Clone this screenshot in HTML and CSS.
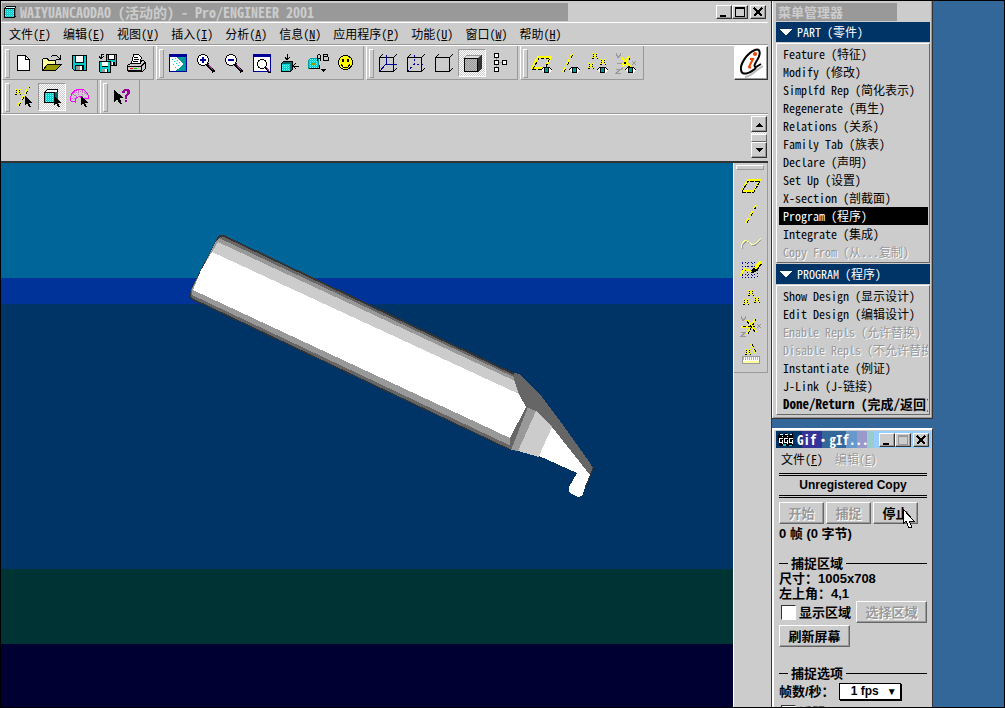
FILE: index.html
```html
<!DOCTYPE html>
<html lang="zh-CN">
<head>
<meta charset="utf-8">
<title>WAIYUANCAODAO (活动的) - Pro/ENGINEER 2001</title>
<link rel="stylesheet" href="styles.css">
</head>
<body>
<svg class="defs" aria-hidden="true">
  <defs>
    <pattern id="dither" width="2" height="2" patternUnits="userSpaceOnUse"><rect width="2" height="2" fill="#0cc"/><rect width="1" height="1" fill="#6ff"/><rect x="1" y="1" width="1" height="1" fill="#3cc"/></pattern>
    <pattern id="graydither" width="2" height="2" patternUnits="userSpaceOnUse"><rect width="2" height="2" fill="#999"/><rect width="1" height="1" fill="#bbb"/><rect x="1" y="1" width="1" height="1" fill="#bbb"/></pattern>
    <symbol id="cur" viewBox="0 0 8 11"><path d="M0 0v9l2-2 2 4h2l-2-4h3z" fill="#000"/></symbol>
    <symbol id="eye" viewBox="0 0 11 8"><path d="M0 4l3-3h5l3 3-3 3H3z" fill="#fff"/><path d="M0 4l3-3h5l3 3" fill="none" stroke="#000"/><rect x="3" y="1" width="5" height="6" fill="#000"/><rect x="4" y="2" width="3" height="4" fill="#099"/></symbol>
    <symbol id="xm" viewBox="0 0 7 7"><path d="M1 1h1v1H1zM4 1h1v1H4zM1 3h1v1H1zM4 3h1v1H4zM0 5h2v1H0zM5 5h1v1H5z" fill="#000"/><path d="M0 0h2v1H0zM4 0h2v1H4zM2 1h2v3H2zM0 4h2v1H0zM4 4h2v1H4z" fill="#ff0"/></symbol>
    <symbol id="disk" viewBox="0 0 15 16"><path d="M0 0h15v16H2l-2-2z" fill="#000"/><path d="M1 1h13v14H2l-1-1z" fill="#0cc"/><rect x="3" y="0" width="9" height="8" fill="#000"/><rect x="4" y="1" width="7" height="6" fill="#fff"/><rect x="3" y="10" width="9" height="5" fill="#000"/><rect x="4" y="11" width="6" height="4" fill="#999"/><rect x="8" y="11" width="2" height="4" fill="#fff"/></symbol>
    <symbol id="letters" viewBox="0 0 22 22"><path d="M1.500 1v2l1 1 1 1M5.500 1v2l-3 3M17 9l4 4m0-4l-4 4M1 17.500h4l-4 4h5" stroke="#999" fill="none"/></symbol>
  </defs>
</svg>
<div class="desktop">
  <main class="window app">
    <header class="titlebar">
      <div class="caption"><svg width="14" height="14" viewBox="0 0 14 14"><path d="M1 3l2-2h10v10l-2 2H1z" fill="#000"/><rect x="2" y="4" width="9" height="8" fill="url(#dither)"/><path d="M2 3l1-1h9l-1 1z" fill="#cff"/><path d="M12 3v8" stroke="#099"/></svg><h1>WAIYUANCAODAO (活动的) - Pro/ENGINEER 2001</h1></div>
      <div class="controls">
        <button class="ctl" aria-label="最小化"><svg width="12" height="10"><path d="M2 8h6v2H2z"/></svg></button>
        <button class="ctl" aria-label="最大化"><svg width="12" height="10"><path d="M1 0h10v10H1zM2 2v7h8V2z" fill-rule="evenodd"/></svg></button>
        <button class="ctl close" aria-label="关闭"><svg width="12" height="10"><path d="M2 1l8 8M10 1L2 9" stroke="#000" stroke-width="2"/></svg></button>
      </div>
    </header>
    <nav class="menubar">
      <button>文件(<u>F</u>)</button><button>编辑(<u>E</u>)</button><button>视图(<u>V</u>)</button><button>插入(<u>I</u>)</button><button>分析(<u>A</u>)</button><button>信息(<u>N</u>)</button><button>应用程序(<u>P</u>)</button><button>功能(<u>U</u>)</button><button>窗口(<u>W</u>)</button><button>帮助(<u>H</u>)</button>
    </nav>
    <div class="toolarea">
      <div class="toolrows">
        <div class="toolrow">
          <div class="group">
            <button class="tool" aria-label="新建"><svg viewBox="0 0 24 24"><path d="M5.500 4.500h8l4 4v11h-12z" fill="#fff" stroke="#000"/><path d="M13.500 4.500v4h4" fill="none" stroke="#000"/></svg></button>
            <button class="tool" aria-label="打开"><svg viewBox="0 0 24 24"><path d="M2.500 19.500v-11l1-1h4l1 2h7v4" fill="#ff9" stroke="#000"/><path d="M2.500 19.500l5-6h14l-6 6z" fill="#990" stroke="#000"/><path d="M11 6l2-2h3l4 4M20 4v4h-4" fill="none" stroke="#000"/></svg></button>
            <button class="tool" aria-label="保存"><svg viewBox="0 0 24 24"><use href="#disk" x="4" y="4" width="15" height="16"/></svg></button>
            <button class="tool" aria-label="保存副本"><svg viewBox="0 0 24 24"><use href="#disk" x="9" y="3" width="13" height="12"/><use href="#disk" x="3" y="10" width="12" height="12"/><path d="M8 3H5v5M3 5l2 3 3-3" fill="none" stroke="#000"/></svg></button>
            <button class="tool" aria-label="打印"><svg viewBox="0 0 24 24"><path d="M7.500 12.500l2-9h5l3 3-2 7z" fill="#fff" stroke="#000"/><path d="M10 6.500h4M10 8.500h5M9 10.500h5" stroke="#000"/><path d="M3.500 14.500l3-2h10l1-3h2l2 2v6l-3 3h-13l-2-1z" fill="#ccc" stroke="#000"/><path d="M4 15.500h13l4-4M17.500 15v5M4 19.500h13" stroke="#000" fill="none"/><path d="M6 17h3v1H6z" fill="red"/><path d="M10 17h3v1h-3z" fill="#0c0"/></svg></button>
          </div>
          <div class="group">
            <button class="tool" aria-label="重画"><svg viewBox="0 0 24 24"><path d="M3 3h18v18H3z" fill="#009"/><path d="M4 6h16v14H4z" fill="#099"/><path d="M4 6h6l7 7-3 4-5 3H4z" fill="#fff"/><path d="M6 8h1v1H6zM9 7h1v1H9zM8 10h1v1H8zM11 9h1v1h-1zM7 13h1v1H7zM10 12h1v1h-1zM13 11h1v1h-1zM12 14h1v1h-1zM9 16h1v1H9z" fill="#0cc"/></svg></button>
            <button class="tool" aria-label="放大"><svg viewBox="0 0 24 24"><circle cx="9" cy="9" r="5.500" fill="#fff" stroke="#000"/><path d="M9 6v6M6 9h6" stroke="#009" stroke-width="2"/><path d="M13 13l7 8" stroke="#000" stroke-width="3"/><path d="M14 13l5 6" stroke="#939"/></svg></button>
            <button class="tool" aria-label="缩小"><svg viewBox="0 0 24 24"><circle cx="9" cy="9" r="5.500" fill="#fff" stroke="#000"/><path d="M6 9h6" stroke="#009" stroke-width="2"/><path d="M13 13l7 8" stroke="#000" stroke-width="3"/><path d="M14 13l5 6" stroke="#939"/></svg></button>
            <button class="tool" aria-label="重新调整"><svg viewBox="0 0 24 24"><path d="M3 3h18v18H3z" fill="#009"/><path d="M4 6h16v14H4z" fill="#fff"/><circle cx="12" cy="13" r="4.500" fill="#fff" stroke="#000"/><path d="M15 16l5 6" stroke="#000" stroke-width="2"/><path d="M16 16l4 5" stroke="#939"/></svg></button>
            <button class="tool" aria-label="定向"><svg viewBox="0 0 24 24"><path d="M3.500 12.500l2-2h9v8l-2 2h-9z" fill="#066" stroke="#000"/><path d="M4 13h8v7H4z" fill="url(#dither)"/><path d="M9.500 3v6M7 6l2 3 3-3M21 15.500h-6M18 12l-3 3 3 3" stroke="#000" fill="none"/></svg></button>
            <button class="tool" aria-label="保存的视图"><svg viewBox="0 0 24 24"><path d="M2.500 9.500l2-2h8v8l-2 2h-8z" fill="url(#dither)" stroke="#099"/><path d="M3 17.500h10v-4" fill="none" stroke="#000"/><path d="M5 12h4v2H5z" fill="#990"/><path d="M11.500 10V5l1-2h1l1 2v5M11 7.500h4M17.500 3v6M17 3.500h4v2h-4M17 9.500h5v-4" fill="none" stroke="#000"/><path d="M14 18h6l-3 3z"/></svg></button>
            <button class="tool" aria-label="模型"><svg viewBox="0 0 24 24"><circle cx="11.500" cy="11.500" r="7" fill="#ff0" stroke="#000"/><path d="M8 8h2v3H8zM13 8h2v3h-2z"/><path d="M7 13l2 3h5l2-3" fill="none" stroke="#000"/></svg></button>
          </div>
          <div class="group">
            <button class="tool" aria-label="线框"><svg viewBox="0 0 24 24"><path d="M3.500 6.500h14v14h-14zM3.500 6.500l3-3M17.500 6.500l3-3M17.500 20.500l3-3" fill="none" stroke="#000"/><path d="M10.500 4v9.500H21M10 13L4 20" fill="none" stroke="#009"/></svg></button>
            <button class="tool" aria-label="隐藏线"><svg viewBox="0 0 24 24"><path d="M3.500 6.500h14v14h-14zM3.500 6.500l3-3M17.500 6.500l3-3M17.500 20.500l3-3" fill="none" stroke="#000"/><path d="M10.500 4v9.500H21M10 13L4 20" fill="none" stroke="#009" stroke-dasharray="2 2"/></svg></button>
            <button class="tool" aria-label="无隐藏线"><svg viewBox="0 0 24 24"><path d="M3.500 6.500h14v14h-14zM3.500 6.500l3-3M17.500 6.500l3-3M17.500 20.500l3-3" fill="none" stroke="#000"/></svg></button>
            <button class="tool pressed" aria-label="着色"><svg viewBox="0 0 24 24"><path d="M18 7l4-4v14l-4 4z" fill="#333"/><path d="M4 7l3-3h14l-3 3z" fill="#ddd" stroke="#999"/><path d="M4.500 7.500h13v13h-13z" fill="url(#graydither)" stroke="#000"/></svg></button>
            <button class="tool" aria-label="模型树"><svg viewBox="0 0 24 24"><path d="M8.500 4v15M8 11.500h8" stroke="#999"/><path d="M6.500 2.500h4v4h-4zM6.500 9.500h4v4h-4zM6.500 16.500h4v4h-4zM14.500 9.500h4v4h-4z" fill="#fff" stroke="#000"/></svg></button>
          </div>
          <div class="group">
            <button class="tool" aria-label="基准平面显示"><svg viewBox="0 0 24 24"><path d="M2 17L8 6h13l-6 11z" fill="none" stroke="#ff0" stroke-width="2"/><path d="M3 18L9 7h11l-5 11z" fill="none" stroke="#000" stroke-dasharray="3 2"/><use href="#eye" x="11" y="15" width="11" height="8"/></svg></button>
            <button class="tool" aria-label="基准轴显示"><svg viewBox="0 0 24 24"><path d="M5 21L14 3" stroke="#ff0" stroke-width="2" stroke-dasharray="6 2"/><path d="M6 21L15 3" stroke="#000" stroke-dasharray="3 5"/><use href="#eye" x="11" y="15" width="11" height="8"/></svg></button>
            <button class="tool" aria-label="基准点显示"><svg viewBox="0 0 24 24"><use href="#xm" x="6" y="2" width="7" height="7"/><use href="#xm" x="14" y="8" width="7" height="7"/><use href="#xm" x="2" y="12" width="7" height="7"/><use href="#eye" x="11" y="15" width="11" height="8"/></svg></button>
            <button class="tool" aria-label="坐标系显示"><svg viewBox="0 0 24 24"><use href="#letters" x="1" y="1" width="22" height="22"/><path d="M3 12.500h5M7 19l2-3" stroke="#999"/><path d="M8 12.500h5M9 16L15 5M8 7l9 9" stroke="#ff0" stroke-width="2" fill="none"/><path d="M10 11h2v2h-2zM15 7h1v2h-1zM14 15h2v1h-2z"/><use href="#eye" x="11" y="15" width="11" height="8"/></svg></button>
          </div>
        </div>
        <div class="toolrow">
          <div class="group">
            <button class="tool" aria-label="选取基准"><svg viewBox="0 0 24 24"><path d="M6 21L17 2" stroke="#ff0" stroke-width="2" stroke-dasharray="5 2"/><path d="M7 21L18 2" stroke="#000" stroke-dasharray="3 4"/><use href="#xm" x="3" y="4" width="7" height="7"/><use href="#cur" x="13" y="11" width="8" height="11"/></svg></button>
            <button class="tool pressed" aria-label="选取特征"><svg viewBox="0 0 24 24"><path d="M4.500 7.500l3-3h10v10l-3 3z" fill="#fff" stroke="#000"/><path d="M15 7h3v8l-3 2z" fill="#066"/><path d="M4.500 7.500h10v10h-10z" fill="url(#dither)" stroke="#000"/><use href="#cur" x="14" y="11" width="8" height="11"/></svg></button>
            <button class="tool" aria-label="选取几何"><svg viewBox="0 0 24 24"><path d="M3 16C1 8 8 4 13 4q6 1 8 9l-7 1q-1-3-4-2-3 1-3 5z" fill="none" stroke="#f0f"/><path d="M5 9l5 4M10 5l1 7M15 5l-1 8M4 13l5 1M6 8q7-3 13 1" stroke="#c6c" fill="none" stroke-dasharray="1 1"/><use href="#cur" x="13" y="11" width="8" height="11"/></svg></button>
          </div>
          <div class="group help">
            <button class="tool" aria-label="上下文帮助"><svg viewBox="0 0 24 24"><path d="M4 5v12l3-3 3 5h2l-2-6h4z"/><path d="M12 8V6l2-2h4l2 2v3l-3 2v3h-2v-4l2-2V6h-2v2z" fill="#909"/><path d="M15 15h2v2h-2z" fill="#909"/></svg></button>
          </div>
        </div>
      </div>
      <div class="logo"><svg class="smooth" viewBox="0 0 32 32"><path d="M28 19l-6 4q-8 7-12 7" fill="none" stroke="#bbb" stroke-width="2"/><path d="M26 17l-5 3q-3 0 0-5c6-9 4-14-1-12C12 6 5 17 6 23c1 6 8 4 15-2" fill="none" stroke="#000" stroke-width="2"/><path d="M15 12h3l-4 8q0 1 2 0" fill="none" stroke="#e40" stroke-width="2"/><circle cx="20" cy="7" r="2" fill="#e40"/></svg></div>
    </div>
    <div class="messages">
      <div class="scroll"><button class="ctl" aria-label="向上"><svg width="9" height="5"><path d="M1 5l3-4h1l3 4z"/></svg></button><span class="thumb"></span><button class="ctl" aria-label="向下"><svg width="9" height="5"><path d="M1 0h7L5 4H4z"/></svg></button></div>
    </div>
    <div class="work">
      <section class="viewport" aria-label="模型">
        <svg width="732" height="545" viewBox="1 163 732 545" role="img" aria-label="外圆槽刀">
          <path d="M190 296l1-7 25-49 2-4 2-1h4l290 138-2 78-321-152z" fill="#333"/>
          <path d="M191 297v-7l26-50 3-3h4l290 138-2 75-320-152z" fill="#666"/>
          <path d="M192 295v-6l24-48 3-3 295 139-3 69-319-151z" fill="#999"/>
          <path d="M212 252l6-10 297 139 4 13z" fill="#ccc"/>
          <path d="M193 290l8-20 11-18 307 142 7 13-16 31z" fill="#fff"/>
          <path d="M526 407h3l-15 44-4-4v-9z" fill="#666"/>
          <path d="M528 407l8 4-18 40-7-1z" fill="#999"/>
          <path d="M536 411l16 16-13 30-21-6z" fill="#ccc"/>
          <path d="M552 427l38 48-8 21-4 1-6-3-3-2v-5l8-14-38-17z" fill="#fff"/>
          <path d="M514 373l6 1 22 23 21 28 27 38 3 5-3 7-38-48-16-16-10-4-7-13-5-14z" fill="#666"/>
          <path d="M593 468l-3 8-5 12" fill="none" stroke="#333"/>
        </svg>
      </section>
      <aside class="side">
        <div class="sidebar">
          <button class="tool" aria-label="基准平面"><svg viewBox="0 0 24 24"><path d="M3 17L9 6h12l-6 11z" fill="none" stroke="#ff0" stroke-width="2"/><path d="M3 18L9 7h12l-6 11z" fill="none" stroke="#000" stroke-dasharray="4 1"/></svg></button>
          <button class="tool" aria-label="基准轴"><svg viewBox="0 0 24 24"><path d="M7 21L17 3" stroke="#ff0" stroke-width="2" stroke-dasharray="6 2"/><path d="M8 21L18 3" stroke="#000" stroke-dasharray="3 5"/></svg></button>
          <button class="tool" aria-label="基准曲线"><svg viewBox="0 0 24 24"><path d="M3 19c2-10 6-8 9-5s6 1 10-4" fill="none" stroke="#999"/><path d="M2 18c2-10 6-8 9-5s6 1 11-5" fill="none" stroke="#ff9"/></svg></button>
          <button class="tool" aria-label="草绘曲线"><svg viewBox="0 0 24 24"><path d="M3 4.500h15M3 8.500h15M3 12.500h15M3 16.500h15M3 19.500h15M3.500 5v15M8.500 5v15M13.500 5v15M18.500 12v8" stroke="#009" stroke-dasharray="1 2"/><path d="M2 18c2-9 5-7 10-5" fill="none" stroke="#ff0" stroke-width="2"/><path d="M12 15l2-5 6-6 3 2-6 8z" fill="#000"/><path d="M15 10l5-7 3 1-6 8z" fill="#ff0"/></svg></button>
          <button class="tool" aria-label="基准点"><svg viewBox="0 0 24 24"><use href="#xm" x="9" y="4" width="7" height="7"/><use href="#xm" x="15" y="11" width="7" height="7"/><use href="#xm" x="4" y="13" width="7" height="7"/></svg></button>
          <button class="tool" aria-label="坐标系"><svg viewBox="0 0 24 24"><use href="#letters" x="1" y="1" width="22" height="22"/><path d="M2 12.500h12M8 20L16 5M8 6l9 12" stroke="#ff0" stroke-width="2" fill="none"/><path d="M4 12.500h12M9 20L17 5M8 7l9 12" stroke="#000" stroke-dasharray="3 2"/></svg></button>
          <button class="tool" aria-label="分析"><svg viewBox="0 0 24 24"><use href="#xm" x="6" y="7" width="7" height="7"/><path d="M12 2l5 10" stroke="#ff0" stroke-width="2" stroke-dasharray="4 2"/><path d="M13 2l5 10" stroke="#000" stroke-dasharray="3 3"/><path d="M3.500 14.500h17v7h-17z" fill="#fff" stroke="#999"/><path d="M4 16.500h16" stroke="#cc0" stroke-dasharray="1 1" stroke-width="3"/><path d="M4 20h16" stroke="#ff9" stroke-width="2"/></svg></button>
        </div>
      </aside>
    </div>
  </main>

  <div class="column">
    <section class="window manager">
      <div class="managertitle"><h2>菜单管理器</h2></div>
      <h3 class="menuhead"><svg width="12" height="6"><path d="M0 0h12L7 6H5z" fill="#fff"/></svg>PART (零件)</h3>
      <div class="menulist">
        <button>Feature (特征)</button><button>Modify (修改)</button><button>Simplfd Rep (简化表示)</button><button>Regenerate (再生)</button><button>Relations (关系)</button><button>Family Tab (族表)</button><button>Declare (声明)</button><button>Set Up (设置)</button><button>X-section (剖截面)</button><button class="selected">Program (程序)</button><button>Integrate (集成)</button><button disabled>Copy From (从...复制)</button>
      </div>
      <h3 class="menuhead"><svg width="12" height="6"><path d="M0 0h12L7 6H5z" fill="#fff"/></svg>PROGRAM (程序)</h3>
      <div class="menulist">
        <button>Show Design (显示设计)</button><button>Edit Design (编辑设计)</button><button disabled>Enable Repls (允许替换)</button><button disabled>Disable Repls (不允许替换)</button><button>Instantiate (例证)</button><button>J-Link (J-链接)</button><button class="strong">Done/Return (完成/返回)</button>
      </div>
    </section>

    <section class="window capture">
      <header class="capturetitle">
        <svg width="16" height="16" viewBox="0 0 16 16"><path d="M0 3l2-2 3 2 3-2 3 2 4-2v13H1z" fill="#000"/><path d="M2 2h3v1H2zM7 2h3v1H7zM12 2h2v1h-2zM4 4h1v1H4zM9 4h1v1H9z" fill="#cff"/><path d="M1 6h4v1H2v3h2V8h1v4H4v-1H1zM6 6h4v1H7v3h2V8h1v4H9v-1H6zM11 6h4v1h-3v3h2V8h1v4h-1v-1h-3z" fill="#fff"/><path d="M5 12h3v2H5zM11 13h3v1h-3z" fill="#0cc"/></svg>
        <h2>Gif·gIf...</h2>
        <div class="controls">
          <button class="ctl" aria-label="最小化"><svg width="12" height="10"><path d="M2 8h6v2H2z"/></svg></button>
          <button class="ctl" aria-label="最大化" disabled><svg width="12" height="10"><path d="M1 0h10v10H1zM2 2v7h8V2z" fill="#999" fill-rule="evenodd"/></svg></button>
          <button class="ctl close" aria-label="关闭"><svg width="12" height="10"><path d="M2 1l8 8M10 1L2 9" stroke="#000" stroke-width="2"/></svg></button>
        </div>
      </header>
      <nav class="menubar small"><button>文件(<u>F</u>)</button><button disabled>编辑(<u>E</u>)</button></nav>
      <div class="capturebody">
        <p class="notice">Unregistered Copy</p>
        <div class="actions"><button class="push" disabled>开始</button><button class="push" disabled>捕捉</button><button class="push">停止<svg class="pointer" width="13" height="21" viewBox="0 0 13 21"><path d="M1 1v15l3-3 3 7 3-1-3-6h5z" fill="#fff" stroke="#000"/></svg></button></div>
        <p>0 帧 (0 字节)</p>
        <h3 class="section first">捕捉区域</h3>
        <p>尺寸：1005x708</p>
        <p>左上角：4,1</p>
        <div class="pick"><label><input type="checkbox">显示区域</label><button class="push" disabled>选择区域</button></div>
        <button class="push refresh">刷新屏幕</button>
        <h3 class="section">捕捉选项</h3>
        <div class="rate"><label for="fps">帧数/秒：</label><span class="select"><select id="fps"><option>1 fps</option></select></span></div>
        <label class="last"><input type="checkbox">透明</label>
      </div>
    </section>
  </div>
</div>
</body>
</html>
```
FILE: styles.css
```css
* { box-sizing: border-box; }
body {
  margin: 0;
  color: #000;
  font: 12px/18px "Noto Sans CJK SC", sans-serif;
  font-feature-settings: "hwid";
}
button, input, select { font: inherit; color: inherit; font-feature-settings: inherit; margin: 0; padding: 0; }
button { border: 0; background: none; white-space: nowrap; }
h1, h2, h3, p { margin: 0; font: inherit; white-space: nowrap; }
svg { display: block; flex: none; shape-rendering: crispEdges; }
.smooth { shape-rendering: auto; }
.defs { position: absolute; width: 0; height: 0; }
button:disabled { color: #999; text-shadow: 1px 1px #fff; }

.desktop {
  display: grid;
  grid-template-columns: minmax(0, 1fr) 161px;
  padding-right: 71px;
  height: 100vh;
  overflow: hidden;
  border: 1px solid #000;
  background: #369;
}
.window { background: #ccc; }

/* Main window */
.app { display: flex; flex-direction: column; min-height: 0; padding-right: 3px; border-right: 1px solid #333; }
.titlebar { display: flex; flex: none; justify-content: space-between; gap: 148px; padding: 2px 2px 0 1px; height: 22px; border-bottom: 1px solid #fff; }
.caption { display: flex; flex: 1; align-items: center; gap: 3px; min-width: 0; height: 18px; padding-left: 1px; background: #999; color: #ccc; }
.caption h1 { font-size: 14px; font-weight: bold; }
.controls { display: flex; padding-top: 2px; }
.ctl { display: flex; align-items: center; justify-content: center; width: 16px; height: 14px; background: #ccc; border: 1px solid; border-color: #fff #333 #333 #fff; box-shadow: inset -1px -1px #999; }
.ctl.close { margin-left: 2px; }
.menubar { display: flex; flex: none; gap: 12px; height: 22px; align-items: center; padding-left: 8px; border-bottom: 1px solid #999; }
.toolarea { display: flex; flex: none; justify-content: space-between; align-items: flex-start; height: 69px; border-top: 1px solid #fff; border-bottom: 1px solid #999; }
.toolrow { display: flex; gap: 2px; padding-left: 1px; }
.group { display: flex; position: relative; height: 34px; padding: 3px 3px 2px 7px; border: 1px solid #999; border-left-color: #fff; border-top: 0; }
.group::before { content: ""; position: absolute; left: 2px; top: 3px; width: 3px; height: 27px; border: 1px solid; border-color: #fff #999 #999 #fff; }
.tool { display: grid; place-items: center; width: 28px; height: 28px; }
.tool svg { width: 24px; height: 24px; }
.tool.pressed { border: 1px solid; border-color: #999 #fff #fff #999; background: repeating-conic-gradient(#fff 0 25%, #ccc 0 50%) 0 0 / 2px 2px; }
.logo { width: 34px; height: 34px; background: #fff; border: 1px solid; border-color: #fff #333 #333 #fff; box-shadow: inset -1px -1px #999; }
.messages { display: flex; flex: none; justify-content: flex-end; height: 49px; padding: 1px 1px 0 0; border-top: 1px solid #fff; border-bottom: 2px solid #333; }
.scroll { display: flex; flex-direction: column; width: 16px; background: repeating-conic-gradient(#fff 0 25%, #ccc 0 50%) 0 0 / 2px 2px; margin-bottom: 3px; }
.scroll .ctl { height: 16px; }
.thumb { flex: 1; margin-top: 2px; background: #ccc; border: 1px solid; border-color: #fff #666 #666 #fff; }
.work { display: flex; flex: 1; min-height: 0; }
.viewport { flex: 1; min-width: 0; overflow: hidden; background: linear-gradient(#069 21.1%, #039 21.1% 25.9%, #036 25.9% 74.7%, #033 74.7% 88.4%, #003 88.4%); }
.side { width: 35px; border-left: 1px solid #fff; }
.sidebar { position: relative; padding: 9px 2px 4px 3px; border: solid #999; border-width: 0 1px 1px 0; }
.sidebar::before { content: ""; position: absolute; left: 2px; right: 3px; top: 2px; height: 3px; border: 1px solid; border-color: #fff #999 #999 #fff; }

/* Menu manager */
.column { display: flex; flex-direction: column; gap: 9px; min-height: 0; }
.manager { flex: none; padding: 2px 2px 2px 4px; border: solid #333; border-width: 0 1px 1px 0; box-shadow: inset 1px 0 #fff, inset -1px -1px #999; }
.managertitle { height: 19px; }
.managertitle h2 { width: 121px; height: 18px; padding-left: 2px; background: #999; color: #ccc; font-size: 13px; font-weight: bold; }
.menuhead { display: flex; align-items: center; gap: 5px; height: 20px; padding-left: 4px; background: #036; color: #fff; }
.menulist { display: flex; flex-direction: column; overflow: hidden; margin: 1px 0; padding: 1px 1px 1px 2px; border: 1px solid; border-color: #fff #666 #666 #fff; }
.menulist + .menuhead { margin-top: 1px; }
.menulist button { height: 18px; padding-left: 4px; text-align: left; overflow: hidden; }
.menulist .selected { background: #000; color: #fff; }
.menulist .strong { font-size: 13px; font-weight: bold; }

/* Capture window */
.capture { flex: 1; min-height: 0; overflow: hidden; padding: 2px 1px 0 4px; border-top: 1px solid #fff; border-right: 1px solid #333; box-shadow: inset 2px 1px #fff; }
.capturetitle { display: flex; align-items: center; gap: 3px; height: 17px; padding: 0 2px; color: #fff; background: linear-gradient(90deg, #036 0 17%, #339 17% 30%, #369 30% 45%, #69c 45% 52%, #99c 52% 59%, #9cc 59% 63%, #9cf 63%); }
.capturetitle h2 { font-size: 13px; font-weight: bold; flex: 1; }
.capturetitle .controls { padding: 0; }
.menubar.small { padding-left: 5px; height: 21px; border: 0; }
.capturebody { padding: 4px 4px 0 3px; font: bold 13px/15px "Liberation Sans", "Noto Sans CJK TC", sans-serif; font-feature-settings: normal; }
.notice { padding: 1px 0; margin-bottom: 4px; text-align: center; border: double #000; border-width: 3px 0; font-size: 12px; line-height: 17px; }
.actions { display: flex; gap: 2px; margin-bottom: 2px; }
.push { height: 22px; min-width: 45px; background: #ccc; border: 1px solid; border-color: #fff #666 #666 #fff; box-shadow: inset -1px -1px #999; }
.actions .push { position: relative; }
.pointer { position: absolute; left: 28px; top: 5px; }
.section { display: flex; align-items: center; gap: 3px; }
.section::before, .section::after { content: ""; height: 1px; background: #000; width: 9px; }
.section::after { flex: 1; }
.section.first { margin-top: 15px; }
.pick { display: flex; align-items: center; justify-content: space-between; margin-bottom: 2px; }
.pick label, .last { display: flex; align-items: center; gap: 3px; padding-left: 2px; }
.capturebody input { appearance: none; width: 15px; height: 15px; background: #fff; border: 1px solid; border-color: #333 #fff #fff #333; }
.pick .push { width: 71px; }
.refresh { display: block; width: 71px; margin-bottom: 19px; }
.rate { display: flex; align-items: center; gap: 4px; height: 20px; }
.select { position: relative; }
.select::after { content: "▼"; position: absolute; right: 4px; top: 1px; font-size: 10px; pointer-events: none; }
.select select { display: block; appearance: none; width: 62px; height: 17px; padding-left: 11px; border: 1px solid #000; border-radius: 0; background: #fff; box-shadow: 1px 1px #000; font-size: 12px; }
.last { margin-top: 4px; }
```
